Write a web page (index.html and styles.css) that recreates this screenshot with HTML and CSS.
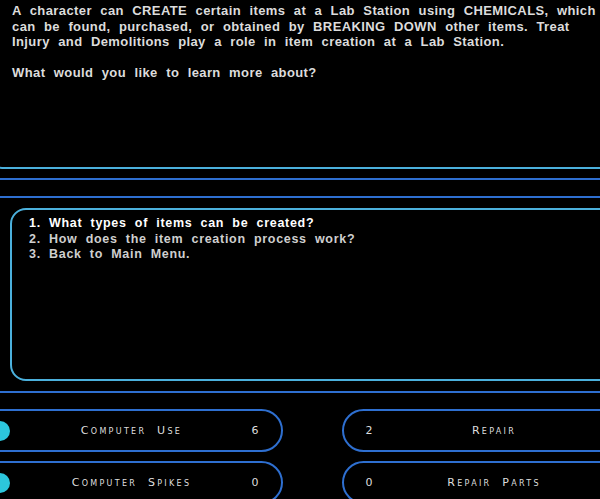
FILE: index.html
```html
<!DOCTYPE html>
<html lang="en">
<head>
    <meta charset="UTF-8">
    <title>Lab Station</title>
    <link rel="stylesheet" href="styles.css">
</head>
<body>
    <div class="screen">
        <div class="info">
            <p>A character can CREATE certain items at a Lab Station using CHEMICALS, which can be found, purchased, or obtained by BREAKING DOWN other items. Treat Injury and Demolitions play a role in item creation at a Lab Station.</p>
            <p>What would you like to learn more about?</p>
        </div>
        <div class="rule rule--a"></div>
        <div class="rule rule--b"></div>
        <div class="menu">
            <div class="menu__item menu__item--active">1. What types of items can be created?</div>
            <div class="menu__item">2. How does the item creation process work?</div>
            <div class="menu__item">3. Back to Main Menu.</div>
        </div>
        <div class="rule rule--c"></div>
        <div class="skills">
            <div class="pill pill--left">
                <span class="pill__label">Computer Use</span>
                <span class="pill__num">6</span>
            </div>
            <div class="pill pill--right">
                <span class="pill__num">2</span>
                <span class="pill__label">Repair</span>
            </div>
            <div class="pill pill--left">
                <span class="pill__label">Computer Spikes</span>
                <span class="pill__num">0</span>
            </div>
            <div class="pill pill--right">
                <span class="pill__num">0</span>
                <span class="pill__label">Repair Parts</span>
            </div>
        </div>
    </div>
</body>
</html>
```

FILE: styles.css
```css
html, body {
    margin: 0;
    padding: 0;
    background: #000;
}
.screen {
    width: 600px;
    height: 499px;
    overflow: hidden;
    font-family: "Liberation Sans", Arial, sans-serif;
    color: #e2e2e2;
}
.info {
    margin-left: -12px;
    padding: 3px 0 0 22px;
    box-sizing: border-box;
    height: 169px;
    border-left: 2px solid #4bb0dc;
    border-bottom: 2px solid #4bb0dc;
    border-bottom-left-radius: 14px;
    font-size: 13px;
    font-weight: bold;
    line-height: 15.6px;
    letter-spacing: 0.4px;
    word-spacing: 4.4px;
    color: #dcdcdc;
}
.info p {
    margin: 0 0 15.6px 0;
}
.rule {
    height: 2px;
    background: #2e6fd0;
}
.rule--a {
    margin-top: 9px;
}
.rule--b {
    margin-top: 16px;
}
.rule--c {
    margin-top: 10px;
}
.menu {
    margin: 10px -20px 0 10px;
    height: 173px;
    box-sizing: border-box;
    padding: 6px 0 0 17px;
    border: 2px solid #4bb0dc;
    border-radius: 16px;
    font-size: 12.5px;
    font-weight: bold;
    line-height: 15.5px;
    letter-spacing: 0.7px;
    word-spacing: 4px;
    color: #cfcfcf;
}
.menu__item--active {
    color: #fff;
}
.skills {
    margin-top: 16px;
    display: grid;
    grid-template-columns: 283px 290px;
    column-gap: 59px;
    row-gap: 9px;
}
.pill {
    position: relative;
    display: flex;
    align-items: center;
    height: 43px;
    box-sizing: border-box;
    border: 2.5px solid #2e6fd0;
    font-family: "DejaVu Sans", Verdana, sans-serif;
    font-variant: small-caps;
    font-size: 11px;
    letter-spacing: 2.3px;
    word-spacing: 5px;
    color: #dedede;
}
.pill--left {
    margin-left: -40px;
    padding: 0 16px 0 56px;
    border-radius: 0 22px 22px 0;
}
.pill--left::before {
    content: "";
    position: absolute;
    left: 28px;
    top: 10px;
    width: 20px;
    height: 20px;
    border-radius: 50%;
    background: #2cc6dc;
}
.pill--right {
    padding: 0 21px 0 15px;
    border-radius: 22px 0 0 22px;
}
.pill__label {
    flex: 1;
    text-align: center;
}
.pill__num {
    width: 20px;
    text-align: center;
    letter-spacing: 0;
}
```
